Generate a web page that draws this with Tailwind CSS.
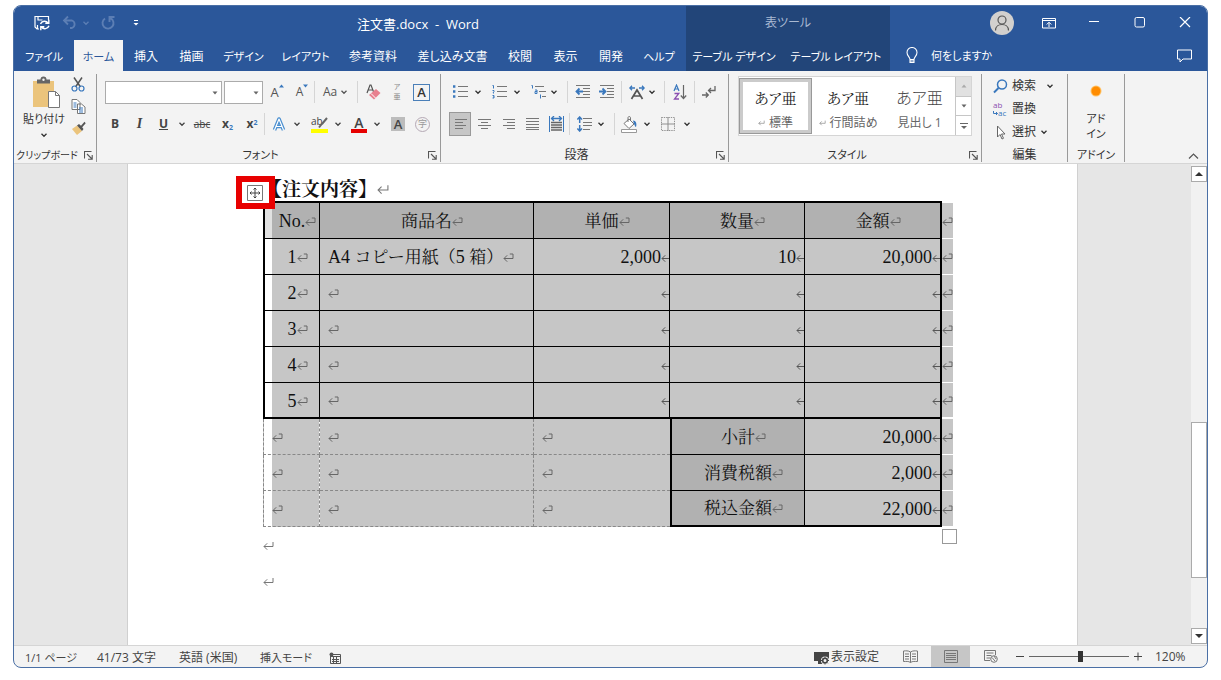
<!DOCTYPE html>
<html lang="ja">
<head>
<meta charset="utf-8">
<title>注文書.docx - Word</title>
<script src="https://cdn.jsdelivr.net/npm/@tailwindcss/browser@4"></script>
</head>
<body class="bg-white">
<svg class="hidden">
  <symbol id="chev" viewBox="0 0 8 8"><path d="M1.5 2.8 4 5.3 6.5 2.8" fill="none" stroke="currentColor" stroke-width="1.3"/></symbol>
  <symbol id="tri" viewBox="0 0 8 8"><path d="M1.5 2.5h5L4 5.5z" fill="currentColor"/></symbol>
  <symbol id="cellmark" viewBox="0 0 11 10"><path d="M4.2 2.3 1 5.5l3.2 3.2M1 5.5h9V1H6.8" fill="none" stroke="#666" stroke-width="1"/></symbol>
  <symbol id="halfmark" viewBox="0 0 8 10"><path d="M4.2 2.3 1 5.5l3.2 3.2M1 5.5h7" fill="none" stroke="#555" stroke-width="1"/></symbol>
  <symbol id="paramark" viewBox="0 0 11 10"><path d="M4.2 2.3 1 5.5l3.2 3.2M1 5.5h9V1" fill="none" stroke="#777" stroke-width="1"/></symbol>
  <symbol id="launch" viewBox="0 0 9 9"><path d="M.5 7.5V.5h7M3 3l5 5M8.2 4v4.2H4" fill="none" stroke="#555" stroke-width="1.1"/></symbol>
</svg>
<div class="h-screen pt-[5px] pb-3 px-[13px] font-['Open_Sans','Noto_Sans_CJK_JP',sans-serif] text-[12px] leading-4 text-[#333]">
<div class="h-full flex flex-col overflow-hidden rounded-lg border border-[#4a6fa5] bg-[#f3f3f3] [font-feature-settings:'palt']">

  <header class="flex shrink-0 h-[65px] bg-[#2b579a] text-white">
    <div class="w-[672px] flex flex-col">
      <div class="h-[34px] flex items-center">
        <button aria-label="上書き保存" class="ml-5 w-4"><svg viewBox="0 0 16 16" class="size-4" fill="none" stroke="#fff" stroke-width="1.2"><path d="M5 14H3L1 12V1.500h13.500V5M4 1.500V5h4.500M3.500 14v-4"/><path d="M6.500 9a4.300 4.300 0 0 1 7.500-1M14.800 4.800v3.500h-3.500M15 10.800a4.300 4.300 0 0 1-7.500 1.200M6.800 15.300v-3.500h3.500" stroke-width="1.400"/></svg></button>
        <button aria-label="元に戻す" class="ml-3 w-4 text-[#5c7eb4]"><svg viewBox="0 0 16 16" class="size-4" fill="none" stroke="currentColor" stroke-width="1.800"><path d="M6 1.500 2 5.500l4 4M2 5.500h8a4 4 0 0 1 0 7.500H8"/></svg></button>
        <button aria-label="元に戻す 履歴" class="ml-1 w-2 text-[#5c7eb4]"><svg class="size-2"><use href="#chev"/></svg></button>
        <button aria-label="繰り返し" class="ml-[10px] w-4 text-[#5c7eb4]"><svg viewBox="0 0 16 16" class="size-4" fill="none" stroke="currentColor" stroke-width="1.900"><path d="M5 3.500a5.500 5.500 0 1 0 5.500-.3M9.500 7V2h5"/></svg></button>
        <button aria-label="クイック アクセス" class="ml-4 w-2"><svg viewBox="0 0 8 8" class="size-2"><path d="M2 1.500h4" stroke="#fff"/><path d="M1.500 4h5L4 6.500z" fill="#fff"/></svg></button>
        <h1 class="ml-[217px] pt-px whitespace-pre text-[13px]">注文書.docx  -  Word</h1>
      </div>
      <nav class="flex flex-1 [&>button]:pt-[2px]">
        <button class="w-[60px] text-[11px]">ファイル</button><button class="w-[49px] bg-[#f3f3f3] text-[#2b579a] text-[11px]">ホーム</button><button class="w-[46px]">挿入</button><button class="w-[45px]">描画</button><button class="w-[59px] text-[11px]">デザイン</button><button class="w-[65px] text-[11px]">レイアウト</button><button class="w-[70px]">参考資料</button><button class="w-[89px]">差し込み文書</button><button class="w-[46px]">校閲</button><button class="w-[45px]">表示</button><button class="w-[46px]">開発</button><button class="w-[50px] text-[11px]">ヘルプ</button>
      </nav>
    </div>
    <div class="w-[204px] flex flex-col bg-[#224579]">
      <div class="h-[34px] flex items-center justify-center text-[#a9b9d2]">表ツール</div>
      <nav class="flex flex-1 text-[11px] [&>button]:pt-[2px]"><button class="w-24 whitespace-nowrap">テーブル デザイン</button><button class="w-[108px] whitespace-nowrap">テーブル レイアウト</button></nav>
    </div>
    <div class="flex-1 flex flex-col">
      <div class="h-[34px] flex items-center justify-end">
        <button aria-label="アカウント" class="mr-3 size-6 rounded-full bg-[#d2d0ce]"><svg viewBox="0 0 24 24" class="size-6" fill="none" stroke="#555" stroke-width="1.200"><circle cx="12" cy="9" r="4"/><path d="M5.500 19.500c0-8 13-8 13 0"/></svg></button>
        <button aria-label="リボンの表示オプション" class="w-[45px] flex justify-center"><svg viewBox="0 0 14 12" class="w-[14px] h-3" fill="none" stroke="#fff"><path d="M.5 1.500h13v9.500H.5zM.5 3.500h13M7 10V5.500M4.700 7.500 7 5.200l2.300 2.300"/></svg></button>
        <button aria-label="最小化" class="w-[46px] flex justify-center"><svg viewBox="0 0 12 12" class="size-3" stroke="#fff"><path d="M1 4.500h10"/></svg></button>
        <button aria-label="最大化" class="w-[45px] flex justify-center"><svg viewBox="0 0 12 12" class="size-3" stroke="#fff" fill="none"><rect x="1" y="0.500" width="9.500" height="9.500" rx="1.500"/></svg></button>
        <button aria-label="閉じる" class="w-[45px] flex justify-center"><svg viewBox="0 0 12 12" class="size-3" stroke="#fff" stroke-width="1.200"><path d="m1 0 10 10M11 0 1 10"/></svg></button>
      </div>
      <div class="flex-1 flex items-center justify-between pl-4 pr-[15px]">
        <button class="flex items-center gap-[13px] text-[11px]"><svg viewBox="0 0 12 17" class="w-3 h-[17px]" fill="none" stroke="#fff" stroke-width="1.100"><path d="M4 12.500c0-2.500-3-3.500-3-7a5 5 0 0 1 10 0c0 3.500-3 4.500-3 7zM4 12.500v3h4v-3M4 14h4"/></svg>何をしますか</button>
        <button aria-label="コメント"><svg viewBox="0 0 15 14" class="w-[15px] h-[14px]" fill="none" stroke="#fff"><path d="M.5 1h14v9H6L3 13v-3H.5z"/></svg></button>
      </div>
    </div>
  </header>

  <div class="shrink-0 h-[93px] flex border-b border-[#d5d5d5] pt-[3px] pb-px">
    <!-- クリップボード -->
    <section class="w-[83px] flex flex-col border-r border-[#999]">
      <div class="flex-1 flex">
        <button class="ml-2 w-[44px] flex flex-col items-center whitespace-nowrap text-[11px]"><svg viewBox="0 0 28 32" class="w-7 h-8 mt-[2px] mb-[3px] ml-1"><path d="M1 5h21v26H1z" fill="#ebc47c"/><path d="M5 7.500V3.500h3.500a3 3 0 0 1 6 0H18v4z" fill="#666"/><circle cx="11.500" cy="3.800" r="1.200" fill="#f3f3f3"/><path d="M16.500 15.500h7l4 4v12h-11z" fill="#fff" stroke="#777"/><path d="M23.500 15.500v4h4" fill="none" stroke="#777"/></svg><span>貼り付け</span><svg class="size-2 mt-1"><use href="#chev"/></svg></button>
        <div class="flex flex-col items-center gap-[7px] ml-1 pt-[3px] w-4">
          <button aria-label="切り取り"><svg viewBox="0 0 14 15" class="w-[14px] h-[15px]" fill="none" stroke-width="1.500"><path d="M3 .5 9.500 10M11 .5 4.500 10" stroke="#555"/><circle cx="3.500" cy="11.500" r="2.500" stroke="#3a78bd" stroke-width="1.200"/><circle cx="10.500" cy="11.500" r="2.500" stroke="#3a78bd" stroke-width="1.200"/></svg></button>
          <button aria-label="コピー"><svg viewBox="0 0 15 15" class="size-[15px]" fill="#fff" stroke="#777"><path d="M1 .5h5l3 3v7H1zM6.500 5h4l3.500 3v6.500H6.500z"/><path d="M2.500 4h3M2.500 6h3M2.500 8h3M8 9h4M8 11h4M8 13h4" stroke="#3a78bd"/></svg></button>
          <button aria-label="書式のコピー"><svg viewBox="0 0 15 14" class="w-[15px] h-[14px]"><path d="m1 8 5-3.500L11 10l-5 4z" fill="#ebc47c"/><path d="M6 4.500 8 3l2 1.800L13.500.8l1.200 1.400-3.500 4L12.500 8 11 10z" fill="#555"/></svg></button>
        </div>
      </div>
      <div class="flex items-center h-[14px] whitespace-nowrap"><span class="flex-1 text-center text-[10px]">クリップボード</span><button aria-label="クリップボードの設定" class="w-4"><svg class="size-[9px] ml-1"><use href="#launch"/></svg></button></div>
    </section>

    <!-- フォント -->
    <section class="w-[344px] flex flex-col border-r border-[#999]">
      <div class="flex-1 pt-[2px]">
        <div class="h-8 flex items-center pl-2">
          <div class="relative w-[117px] mr-[2px]"><select aria-label="フォント名" class="w-full h-[23px] appearance-none border border-[#ababab] bg-white"></select><svg class="absolute right-[3px] top-2 size-2 pointer-events-none text-[#666]"><use href="#tri"/></svg></div>
          <div class="relative w-[39px]"><select aria-label="フォント サイズ" class="w-full h-[23px] appearance-none border border-[#ababab] bg-white"></select><svg class="absolute right-[3px] top-2 size-2 pointer-events-none text-[#666]"><use href="#tri"/></svg></div>
          <button aria-label="拡大" class="w-[28px] flex justify-center items-start text-[#555] text-[13px]">A<svg viewBox="0 0 5 4" class="w-[5px] h-1"><path d="m0 3.500 2.500-3 2.500 3z" fill="#3a78bd"/></svg></button>
          <button aria-label="縮小" class="w-[22px] flex justify-center items-start text-[#555] text-[12px]">A<svg viewBox="0 0 5 4" class="w-[5px] h-1"><path d="M0 .5 2.500 3.500 5 .5z" fill="#3a78bd"/></svg></button>
          <i class="w-px h-[22px] mr-2 ml-px bg-[#d5d5d5]"></i>
          <button class="w-[34px] flex items-center gap-[3px] text-[#555]">Aa<svg class="size-2"><use href="#chev"/></svg></button>
          <i class="w-px h-[22px] mr-[3px] bg-[#d5d5d5]"></i>
          <button aria-label="書式のクリア" class="w-6 flex justify-center"><svg viewBox="0 0 15 16" class="w-[15px] h-4"><path d="M1 9 4 1h1l3 8M2 6h5" fill="none" stroke="#555" stroke-width="1.200"/><path d="m3 11 7-6 4.500 4-6.500 6.500z" fill="#e8808f"/><path d="m5 9.500 4.500 4.500" stroke="#fff"/></svg></button>
          <button aria-label="ルビ" class="w-6 flex flex-col items-center text-[7px] leading-[10px] text-[#888]"><span>ア</span><span>亜</span></button>
          <button aria-label="囲み線" class="ml-1 size-[17px] border border-[#4a7fb8] font-semibold text-[13px] leading-[14px]">A</button>
        </div>
        <div class="h-8 flex items-center pl-[6px] text-[#444]">
          <button class="w-6 font-bold">B</button>
          <button class="w-[25px] italic font-bold font-['Liberation_Serif'] text-[14px]">I</button>
          <button class="w-[23px] font-bold underline">U</button>
          <button aria-label="下線の種類" class="w-[14px] flex justify-center"><svg class="size-2"><use href="#chev"/></svg></button>
          <button class="w-[26px] line-through text-[10px]">abc</button>
          <button class="w-[25px] font-bold">x<sub class="text-[7px] text-[#3a78bd]">2</sub></button>
          <button class="w-[24px] font-bold">x<sup class="text-[7px] text-[#3a78bd]">2</sup></button>
          <i class="w-px h-[22px] bg-[#d5d5d5]"></i>
          <button aria-label="文字の効果" class="w-7 flex justify-center"><svg viewBox="0 0 14 15" class="w-[14px] h-[15px]" fill="none" stroke-linejoin="round"><path d="M2.500 13 7 2l4.500 11M4 9.500h6" stroke="#4a8fd0" stroke-width="3.600"/><path d="M2.500 13 7 2l4.500 11M4 9.500h6" stroke="#fff" stroke-width="1.200"/></svg></button>
          <button aria-label="効果の種類" class="w-2"><svg class="size-2"><use href="#chev"/></svg></button>
          <button class="ml-[10px] w-[17px] h-[18px] relative text-[10px] border-b-4 border-[#ff0] flex items-start leading-[12px]" aria-label="蛍光ペン">ab<svg viewBox="0 0 10 12" class="absolute left-[7px] top-[2px] w-[10px] h-3"><path d="M9 1 4 7M4.500 6 1 10.500" stroke="#666" stroke-width="2"/></svg></button>
          <button aria-label="蛍光ペンの色" class="ml-[6px] w-2"><svg class="size-2"><use href="#chev"/></svg></button>
          <button class="ml-[9px] w-4 h-[18px] border-b-4 border-[#e60000] text-[14px] leading-[13px] font-semibold">A</button>
          <button aria-label="文字の色" class="ml-[6px] w-2"><svg class="size-2"><use href="#chev"/></svg></button>
          <button class="ml-[10px] size-[14px] bg-[#bcbcbc] text-[13px] leading-[14px] font-semibold">A</button>
          <button class="ml-[10px] size-[15px] rounded-full border border-[#b5a9b5] text-[9px] leading-[12px] text-[#999]">字</button>
        </div>
      </div>
      <div class="flex items-center h-[14px] text-[11px]"><span class="flex-1 text-center">フォント</span><button aria-label="フォントの設定" class="w-4"><svg class="size-[9px] ml-1"><use href="#launch"/></svg></button></div>
    </section>

    <!-- 段落 -->
    <section class="w-[288px] flex flex-col border-r border-[#999]">
      <div class="flex-1 pt-[2px]">
        <div class="h-8 flex items-center pl-3">
          <button aria-label="箇条書き"><svg viewBox="0 0 15 14" class="w-[15px] h-[14px]"><path d="M5 1.500h10M5 6.500h10M5 11.500h10" stroke="#777"/><path d="M0 1.500h2.400M0 6.500h2.400M0 11.500h2.400" stroke="#3a78bd" stroke-width="2.400"/></svg></button>
          <svg class="size-2 ml-[6px] mr-[10px]"><use href="#chev"/></svg>
          <button aria-label="段落番号"><svg viewBox="0 0 15 14" class="w-[15px] h-[14px]"><path d="M5 1.500h10M5 6.500h10M5 11.500h10" stroke="#777"/><path d="M.5.5h1v3M.5 5.500h1.500v1l-1 1.500H2M.5 10.500H2V13H.5M2 12H1" stroke="#3a78bd" fill="none"/></svg></button>
          <svg class="size-2 ml-[6px] mr-[10px]"><use href="#chev"/></svg>
          <button aria-label="アウトライン"><svg viewBox="0 0 15 14" class="w-[15px] h-[14px]"><path d="M4 1.500h9M8 6.500h7M11 11.500h4" stroke="#777"/><path d="M.5.5h1v3M4 5h2v3.500H4V6.500h2M9.500 9.500v4" stroke="#3a78bd" fill="none"/></svg></button>
          <svg class="size-2 ml-1 mr-[9px]"><use href="#chev"/></svg>
          <i class="w-px h-[22px] bg-[#d5d5d5] mr-[7px]"></i>
          <button aria-label="インデントを減らす"><svg viewBox="0 0 15 14" class="w-[15px] h-[14px]"><path d="M1 .5h14M8 3.500h7M8 6.500h7M8 9.500h7M1 12.500h14" stroke="#777"/><path d="M8 6.500H1.500M4.500 3.500l-3 3 3 3" stroke="#3a78bd" stroke-width="1.800" fill="none"/></svg></button>
          <button aria-label="インデントを増やす" class="ml-[9px]"><svg viewBox="0 0 15 14" class="w-[15px] h-[14px]"><path d="M1 .5h14M8 3.500h7M8 6.500h7M8 9.500h7M1 12.500h14" stroke="#777"/><path d="M0 6.500h6.500M3.500 3.500l3 3-3 3" stroke="#3a78bd" stroke-width="1.800" fill="none"/></svg></button>
          <i class="w-px h-[22px] bg-[#d5d5d5] mx-[7px]"></i>
          <button aria-label="拡張書式"><svg viewBox="0 0 16 15" class="w-4 h-[15px]"><path d="m2.500 14 5.500-9 5.500 9M5 11h6" stroke="#555" stroke-width="1.700" fill="none"/><path d="M1 3h5M3 .8.8 3 3 5.200M10 3h5M13 .8 15.200 3 13 5.200" stroke="#3a78bd" stroke-width="1.300" fill="none"/></svg></button>
          <svg class="size-2 ml-[3px] mr-2"><use href="#chev"/></svg>
          <i class="w-px h-[22px] bg-[#d5d5d5] mr-2"></i>
          <button aria-label="並べ替え"><svg viewBox="0 0 14 16" class="w-[14px] h-4" fill="none"><path d="M1 7 3.500 1 6 7M2 5h3" stroke="#3a78bd" stroke-width="1.200"/><path d="M1.500 9.500h4.300l-4.300 5.500h4.500" stroke="#8a4fb0" stroke-width="1.300"/><path d="M10.500 1v13.500M7.800 11.500l2.700 3 2.700-3" stroke="#666" stroke-width="1.200"/></svg></button>
          <i class="w-px h-[22px] bg-[#d5d5d5] mx-[7px]"></i>
          <button aria-label="編集記号"><svg viewBox="0 0 14 12" class="w-[14px] h-3" fill="none" stroke="#666" stroke-width="1.300"><path d="M13 0v4.500H6.500M9 2 6.500 4.500 9 7M0 9h6M3.800 6.500 6.300 9l-2.500 2.500"/></svg></button>
        </div>
        <div class="h-8 flex items-center pl-2">
          <button aria-label="左揃え" class="w-[22px] h-6 border border-[#999] bg-[#c6c6c6] flex items-center justify-center"><svg viewBox="0 0 13 11" class="w-[13px] h-[11px]"><path d="M1 .5h12M1 3.500h8M1 6.500h11M1 9.500h8" stroke="#777"/></svg></button>
          <button aria-label="中央揃え" class="w-6 ml-px flex justify-center"><svg viewBox="0 0 13 11" class="w-[13px] h-[11px]"><path d="M0 .5h13M3 3.500h7M0 6.500h13M3 9.500h7" stroke="#777"/></svg></button>
          <button aria-label="右揃え" class="w-6 flex justify-center"><svg viewBox="0 0 13 11" class="w-[13px] h-[11px]"><path d="M1 .5h12M5 3.500h8M1 6.500h12M5 9.500h8" stroke="#777"/></svg></button>
          <button aria-label="両端揃え" class="w-6 flex justify-center"><svg viewBox="0 0 13 12" class="w-[13px] h-3"><path d="M0 .5h13M0 3.500h13M0 6.500h13M0 9.500h13M0 11.500h13" stroke="#777"/></svg></button>
          <button aria-label="均等割り付け" class="w-6 flex justify-center"><svg viewBox="0 0 15 16" class="w-[15px] h-4" fill="none"><path d="M.5 0v16M14.500 0v16" stroke="#3a78bd"/><path d="M2 2.500h11M5 0 2.500 2.500 5 5M10 0l2.500 2.500L10 5" stroke="#3a78bd" stroke-width="1.300"/><path d="M2 6.500h11M2 9h11M2 11.500h11M2 14h11" stroke="#666" stroke-width="1.400"/></svg></button>
          <i class="w-px h-[22px] bg-[#d5d5d5] ml-px mr-[7px]"></i>
          <button aria-label="行間"><svg viewBox="0 0 15 16" class="w-[15px] h-4" fill="none"><path d="M6 2.500h9M6 6.500h9M6 9.500h9M6 13.500h7" stroke="#777"/><path d="M2.700 1v6M.4 3.500 2.700 1 5 3.500M2.700 9v6M.4 12.500 2.700 15 5 12.500" stroke="#3a78bd" stroke-width="1.500"/></svg></button>
          <svg class="size-2 ml-[5px] mr-[9px]"><use href="#chev"/></svg>
          <i class="w-px h-[22px] bg-[#d5d5d5] mr-[6px]"></i>
          <button aria-label="塗りつぶし"><svg viewBox="0 0 17 17" class="size-[17px]" fill="#fff" stroke="#777"><path d="M3 7.500 8 3l5 5-5 4.500z"/><path d="M7 6V1.500A1.300 1.300 0 0 1 9.500 1.500V4" fill="none"/><path d="M12 4.500c3 0 4 3 3 6.500-1 0-1-2-2-3z" fill="#3a78bd" stroke="none"/><path d="M.5 13.500h15v3H.500z" stroke="#999"/></svg></button>
          <svg class="size-2 ml-[5px] mr-[10px]"><use href="#chev"/></svg>
          <button aria-label="罫線"><svg viewBox="0 0 15 15" class="w-[14px] h-[14px]" fill="none" stroke="#888"><path d="M.5.5h14v14H.5z" stroke-dasharray="1.500 1"/><path d="M7.500 0v15M0 7.500h15"/></svg></button>
          <svg class="size-2 ml-2"><use href="#chev"/></svg>
        </div>
      </div>
      <div class="flex items-center h-[14px]"><span class="flex-1 text-center">段落</span><button aria-label="段落の設定" class="w-4"><svg class="size-[9px] ml-1"><use href="#launch"/></svg></button></div>
    </section>

    <!-- スタイル -->
    <section class="w-[253px] flex flex-col border-r border-[#999]">
      <div class="flex-1 pl-[9px] pt-[2px]">
        <div class="flex w-[234px] h-[60px] border border-[#d5d5d5] bg-white">
          <button class="w-[73px] h-[56px] mt-px border border-[#999] p-[3px] bg-[#cbcbcb]"><span class="flex flex-col items-center gap-[9px] h-full pt-2 bg-white"><span class="text-[15px] leading-4 text-[#222] font-['Noto_Serif_CJK_JP','Noto_Sans_CJK_JP',serif]">あア亜</span><span class="flex items-center gap-1 leading-4 text-[#666] whitespace-nowrap"><svg class="w-[7px] h-[6px]"><use href="#paramark"/></svg>標準</span></span></button>
          <button class="w-[72px] flex flex-col items-center pt-[13px] gap-[9px]"><span class="text-[15px] leading-4 text-[#222] font-['Noto_Serif_CJK_JP','Noto_Sans_CJK_JP',serif]">あア亜</span><span class="flex items-center gap-1 leading-4 text-[#666] whitespace-nowrap"><svg class="w-[7px] h-[6px]"><use href="#paramark"/></svg>行間詰め</span></button>
          <button class="flex-1 flex flex-col items-center pt-[13px] gap-[9px]"><span class="text-[16px] leading-4 text-[#444] font-light">あア亜</span><span class="leading-4 text-[#666]">見出し 1</span></button>
          <div class="w-4 flex flex-col border-l border-[#c6c6c6] divide-y divide-[#c6c6c6] text-[#666]">
            <button aria-label="前へ" class="flex-1 bg-[#e1e1e1] text-[#aaa] flex items-center justify-center"><svg class="size-2 rotate-180"><use href="#tri"/></svg></button>
            <button aria-label="次へ" class="flex-1 flex items-center justify-center"><svg class="size-2"><use href="#tri"/></svg></button>
            <button aria-label="その他" class="flex-1 flex items-center justify-center"><svg viewBox="0 0 8 8" class="size-2"><path d="M0 1.500h8" stroke="currentColor"/><path d="M1 4h6L4 7z" fill="currentColor"/></svg></button>
          </div>
        </div>
      </div>
      <div class="flex items-center h-[14px] text-[11px]"><span class="flex-1 text-center">スタイル</span><button aria-label="スタイルの設定" class="w-4"><svg class="size-[9px] ml-1"><use href="#launch"/></svg></button></div>
    </section>

    <!-- 編集 -->
    <section class="w-[86px] flex flex-col border-r border-[#999]">
      <div class="flex-1 flex flex-col pl-[11px] gap-[7px] pt-1">
        <button class="h-4 flex items-center"><svg viewBox="0 0 15 15" class="size-[15px] mr-1" fill="none" stroke="#3a78bd"><circle cx="9" cy="5.500" r="4.500" stroke-width="1.500"/><path d="M5.500 9 1 13.500" stroke-width="2"/></svg>検索<svg class="size-2 ml-[10px]"><use href="#chev"/></svg></button>
        <button class="h-4 flex items-center"><span class="w-[15px] mr-1 flex flex-col text-[8px] leading-[8px] text-left"><span class="text-[#8a4fb0]">ab</span><span class="text-[#3a78bd] flex items-center"><svg viewBox="0 0 5 5" class="size-[5px]"><path d="M.5 0v2.500h4M3 1l1.500 1.500L3 4" fill="none" stroke="currentColor"/></svg>ac</span></span>置換</button>
        <button class="h-4 flex items-center"><svg viewBox="0 0 15 15" class="size-[15px] mr-1" fill="#fff" stroke="#666"><path d="M4.500 1v11l2.500-2.500 2 4.500 1.500-.7-2-4.300h3.500z"/></svg>選択<svg class="size-2 ml-1"><use href="#chev"/></svg></button>
      </div>
      <div class="h-[14px] text-center leading-[14px]">編集</div>
    </section>

    <!-- アドイン -->
    <section class="w-[57px] flex flex-col border-r border-[#999] text-[11px]">
      <button class="flex-1 flex flex-col items-center leading-[15px]"><svg viewBox="0 0 12 12" class="size-3 mt-[11px] mb-[14px]"><circle cx="6" cy="6" r="5.500" fill="#ffc266"/><circle cx="6" cy="6" r="4.500" fill="#ff8c00"/></svg><span>アド</span><span>イン</span></button>
      <div class="h-[14px] text-center leading-[14px]">アドイン</div>
    </section>
    <div class="flex-1 flex items-end justify-end pr-2 pb-[2px]"><button aria-label="リボンを折りたたむ"><svg viewBox="0 0 11 8" class="w-[11px] h-2"><path d="m1 6.500 4.500-4.500L10 6.500" fill="none" stroke="#555" stroke-width="1.200"/></svg></button></div>
  </div>

  <main class="flex-1 min-h-0 flex bg-[#e6e6e6]">
    <div class="flex-1 overflow-hidden flex justify-center">
      <article class="w-[951px] shrink-0 border-x border-[#d0d0d0] bg-white pt-3 pl-[135px] font-['Liberation_Serif','Noto_Serif_CJK_JP','Noto_Sans_CJK_JP',serif] text-[#111] [font-feature-settings:normal]">
        <div class="relative w-[690px]">
          <button aria-label="表の移動ハンドル" class="absolute z-10 -left-[27px] top-0 w-[39px] h-[33px] border-[6px] border-[#e80000] bg-white flex items-center pl-[5px]"><svg viewBox="0 0 16 16" class="size-4 shrink-0" fill="none" stroke="#777"><path d="M.5.5h15v15H.5z" fill="#fff"/><path d="M8 3v10M3 8h10M6.500 4.500 8 3l1.500 1.500M6.500 11.500 8 13l1.500-1.500M4.500 6.500 3 8l1.500 1.500M11.500 6.500 13 8l-1.500 1.500" stroke="#444"/></svg></button>
          <h2 class="h-[25px] pt-[2px] flex items-center text-[19px] leading-6 font-bold whitespace-nowrap">【注文内容】<svg class="w-3 h-[11px]"><use href="#paramark"/></svg></h2>
          <table class="table-fixed w-[690px] border-separate border-spacing-0 text-[17px] leading-6
            [&_td]:p-0 [&_th]:p-0 [&_td]:pt-[2px] [&_th]:pt-[2px] [&_th]:font-normal [&_td]:h-9 [&_b]:text-[18px] [&_b]:font-normal
            [&_td]:border-b [&_td]:border-r [&_td]:border-black [&_td]:bg-[#c6c6c6]
            [&_th]:border-b [&_th]:border-r [&_th]:border-black [&_th]:bg-[#b1b1b1]
            [&_svg]:inline-block [&_svg]:align-baseline">
            <colgroup><col class="w-[57px]"><col class="w-[214px]"><col class="w-[136px]"><col class="w-[135px]"><col class="w-[137px]"><col class="w-[11px]"></colgroup>
            <thead class="[&_th]:border-t-2">
              <tr class="h-[38px]"><th class="border-l-2 bg-[linear-gradient(90deg,#e1e1e1_7px,#b1b1b1_7px)]!"><b>No.</b><svg class="w-[11px] h-[10px] -mr-[11px]"><use href="#cellmark"/></svg></th><th>商品名<svg class="w-[11px] h-[10px] -mr-[11px]"><use href="#cellmark"/></svg></th><th>単価<svg class="w-[11px] h-[10px] -mr-[11px]"><use href="#cellmark"/></svg></th><th>数量<svg class="w-[11px] h-[10px] -mr-[11px]"><use href="#cellmark"/></svg></th><th class="border-r-2!">金額<svg class="w-[11px] h-[10px] -mr-[11px]"><use href="#cellmark"/></svg></th><td class="border-r-0! border-t-2 border-white!"><svg class="w-[11px] h-[10px]"><use href="#cellmark"/></svg></td></tr>
            </thead>
            <tbody id="items" class="[&_td:nth-child(1)]:border-l-2 [&_td:nth-child(1)]:text-center [&_td:nth-child(1)]:bg-[linear-gradient(90deg,#fff_7px,#c6c6c6_7px)] [&_td:nth-child(2)]:pl-2 [&_td:nth-child(3)]:text-right [&_td:nth-child(4)]:text-right [&_td:nth-child(5)]:text-right [&_td:nth-child(5)]:border-r-2 [&_td:nth-child(6)]:border-r-0 [&_td:nth-child(6)]:border-white [&_tr:last-child_td]:border-b-2"></tbody>
            <tbody id="totals" class="[&_td:nth-child(-n+3)]:border-dashed [&_td:nth-child(-n+3)]:border-[#888] [&_td:nth-child(1)]:border-l [&_td:nth-child(1)]:pl-2 [&_td:nth-child(1)]:bg-[linear-gradient(90deg,#fff_8px,#c6c6c6_8px)] [&_td:nth-child(2)]:pl-2 [&_td:nth-child(3)]:pl-2 [&_td:nth-child(3)]:border-r-0 [&_td:nth-child(4)]:border-l-2 [&_td:nth-child(4)]:bg-[#b1b1b1] [&_td:nth-child(4)]:text-center [&_td:nth-child(5)]:text-right [&_td:nth-child(5)]:border-r-2 [&_td:nth-child(6)]:border-r-0 [&_td:nth-child(6)]:border-white [&_tr:last-child_td:nth-child(4)]:border-b-2 [&_tr:last-child_td:nth-child(5)]:border-b-2"></tbody>
          </table>
          <span class="absolute left-[679px] top-[353px] size-[15px] border border-[#999] bg-white"></span>
          <p class="h-9 pt-[14px]"><svg class="w-[11px] h-[10px]"><use href="#paramark"/></svg></p>
          <p class="h-9 pt-[14px]"><svg class="w-[11px] h-[10px]"><use href="#paramark"/></svg></p>
        </div>
      </article>
    </div>
    <div class="w-4 flex flex-col bg-[#f1f1f1] pt-[2px] pb-px">
      <button aria-label="上へスクロール" class="h-4 border border-[#ababab] bg-white flex items-center justify-center"><svg viewBox="0 0 8 8" class="size-2"><path d="M0 6h8L4 2z" fill="#333"/></svg></button>
      <div class="flex-1 flex flex-col"><div class="grow-[241]"></div><div class="grow-[154] border border-[#ababab] bg-white"></div><div class="grow-[50]"></div></div>
      <button aria-label="下へスクロール" class="h-4 border border-[#ababab] bg-white flex items-center justify-center"><svg viewBox="0 0 8 8" class="size-2"><path d="M0 2h8L4 6z" fill="#333"/></svg></button>
    </div>
  </main>

  <footer class="shrink-0 h-[22px] flex items-center border-t border-[#d5d5d5] pl-[11px] pr-[18px] text-[#444] whitespace-nowrap">
    <div class="flex items-center pt-[2px] text-left"><button class="w-[72px] text-left text-[11px]">1/1 ページ</button><button class="w-[82px] text-left">41/73 文字</button><button class="w-[81px] text-left">英語 (米国)</button><button class="w-[69px] text-left text-[11px]">挿入モード</button>
      <button aria-label="マクロの記録"><svg viewBox="0 0 12 12" class="size-3" fill="none" stroke="#555"><path d="M1.500 2.500h10v9h-10zM1.500 4.500h10M3 7.500h7M3 9.500h7M4.500 5v6M7.500 5v6"/><circle cx="2.500" cy="2.500" r="2" fill="#555" stroke="none"/></svg></button></div>
    <button class="ml-auto flex items-center pt-px"><svg viewBox="0 0 16 14" class="w-4 h-[14px] mt-px mr-px"><path d="M0 1h15v9H0zM4 10h4v3H4z" fill="#444"/><circle cx="11" cy="9.500" r="4" fill="#f3f3f3"/><circle cx="11" cy="9.500" r="2.300" fill="none" stroke="#444" stroke-width="1.600"/><path d="M11 5.500v8M7 9.500h8M8.200 6.700l5.600 5.600M13.800 6.700l-5.600 5.600" stroke="#444" stroke-dasharray="1.400 5.200"/></svg>表示設定</button>
    <button aria-label="閲覧モード" class="w-[52px] h-full flex items-center justify-center pl-[10px]"><svg viewBox="0 0 15 13" class="w-[15px] h-[13px]" fill="none" stroke="#777"><path d="M7.500 2v10.500M7.500 2C5 .5 3 .8.5 1v10.500c2.500 0 5-.5 7 1 2-1.500 4.500-1 7-1V1c-2.500-.2-4.500-.5-7 1zM2 4h4M2 6.500h4M2 9h4M9 4h4M9 6.500h4M9 9h4"/></svg></button>
    <button aria-label="印刷レイアウト" class="w-[39px] h-full bg-[#c6c6c6] flex items-center justify-center"><svg viewBox="0 0 14 13" class="w-[14px] h-[13px]" fill="none" stroke="#777"><path d="M.5.5h13v12H.5zM2 3.500h10M2 5.500h10M2 7.500h10M2 9.500h10"/></svg></button>
    <button aria-label="Web レイアウト" class="w-[41px] flex justify-center"><svg viewBox="0 0 14 13" class="w-[14px] h-[13px]" fill="none" stroke="#777"><path d="M6 10.500H.5V.5h11V5M2.500 3h7M2.500 5.500h5M2.500 8h4"/><circle cx="10" cy="9" r="3.300" fill="#f3f3f3"/><path d="m8 7.500 3 3.500M10 6l2 3"/></svg></button>
    <button aria-label="縮小" class="w-[10px] ml-1"><svg viewBox="0 0 10 10" class="size-[10px]"><path d="M1 4.500h8" stroke="#444"/></svg></button>
    <input type="range" min="0" max="100" value="52" aria-label="ズーム" class="mx-1 w-[100px] h-4 appearance-none bg-[linear-gradient(#666,#666)] bg-[length:100%_1px] bg-no-repeat bg-center [&::-webkit-slider-thumb]:appearance-none [&::-webkit-slider-thumb]:w-[5px] [&::-webkit-slider-thumb]:h-[11px] [&::-webkit-slider-thumb]:bg-[#333]">
    <button aria-label="拡大" class="w-[10px]"><svg viewBox="0 0 10 10" class="size-[10px]"><path d="M1 4.500h8M5 .5v8" stroke="#444"/></svg></button>
    <button class="ml-3 w-[34px] pt-px text-left">120%</button>
  </footer>
</div>
</div>
<script>
  const mark = '<svg class="w-[11px] h-[10px]"><use href="#cellmark"/></svg>';
  const hung = '<svg class="w-[11px] h-[10px] -mr-[11px]"><use href="#cellmark"/></svg>';
  const half = '<svg class="w-2 h-[10px]"><use href="#halfmark"/></svg>';
  const num = n => n ? `<b>${n}</b>` : '';
  const items = [['1', '<b>A4 </b>コピー用紙（<b>5 </b>箱）', '2,000', '10', '20,000'], ['2'], ['3'], ['4'], ['5']];
  document.getElementById('items').innerHTML = items.map(([no, name = '', price, qty, sum]) =>
    `<tr><td>${num(no)}${hung}</td><td>${name}${mark}</td><td>${num(price)}${half}</td><td>${num(qty)}${half}</td><td>${num(sum)}${half}</td><td>${mark}</td></tr>`).join('');
  const totals = [['小計', '20,000'], ['消費税額', '2,000'], ['税込金額', '22,000']];
  document.getElementById('totals').innerHTML = totals.map(([label, sum]) =>
    `<tr><td>${mark}</td><td>${mark}</td><td>${mark}</td><td>${label}${hung}</td><td>${num(sum)}${half}</td><td>${mark}</td></tr>`).join('');
</script>
</body>
</html>
